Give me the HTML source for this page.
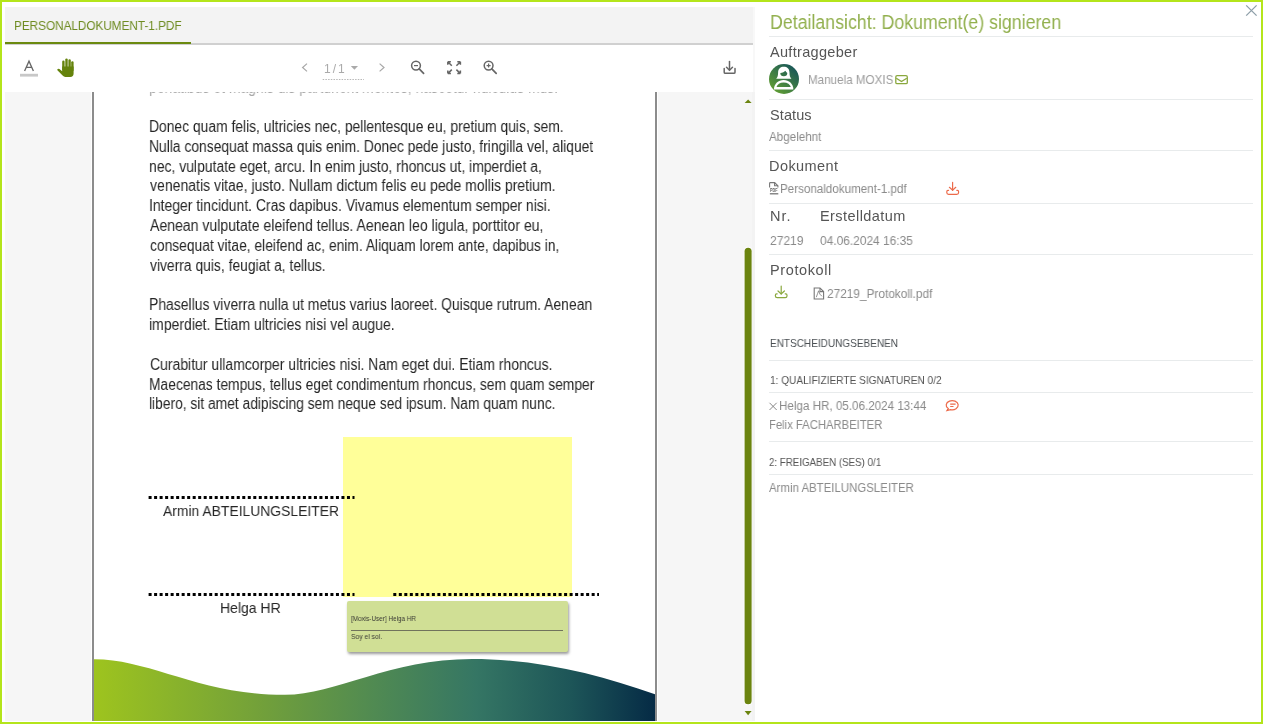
<!DOCTYPE html>
<html><head><meta charset="utf-8">
<style>
*{margin:0;padding:0;box-sizing:border-box}
html,body{width:1263px;height:724px;overflow:hidden;background:#fff;font-family:"Liberation Sans",sans-serif;position:relative}
.t{position:absolute;white-space:pre;transform-origin:0 0;will-change:transform;font-family:"Liberation Sans",sans-serif}
.bp{display:inline-block;width:0;height:0;vertical-align:baseline}
.r{position:absolute}
svg{position:absolute;overflow:visible}
#frame{left:0;top:0;width:1263px;height:724px;border:2px solid #b4e51b;z-index:50;pointer-events:none}
.dv{position:absolute;left:769px;width:484px;height:1px;background:#e8ebec}
</style></head><body>
<!-- tab bar -->
<div class="r" style="left:5px;top:7px;width:748px;height:36px;background:#f3f3f3"></div>
<div class="r" style="left:5px;top:43px;width:748px;height:2px;background:#d0d0d0"></div>
<div class="r" style="left:753px;top:7px;width:2px;height:85px;background:#f8f8f8"></div>
<div class="r" style="left:752px;top:92px;width:3px;height:629px;background:#f3f3f3;z-index:2"></div>
<div class="r" style="left:5px;top:42px;width:186px;height:2px;background:#6b8a10"></div>

<!-- toolbar icons -->
<svg style="left:0;top:0" width="760" height="92" viewBox="0 0 760 92">
  <!-- A underline -->
  <path d="M24.6 71 L29 61.2 L33.4 71 M26.3 67.3 H31.7" fill="none" stroke="#666" stroke-width="1.3"/>
  <rect x="20" y="73.8" width="18" height="2.8" fill="#c8c8c8"/>
  <!-- hand -->
  <g fill="#65830c">
    <rect x="62.2" y="60.6" width="2.4" height="10" rx="1.2"/>
    <rect x="65.3" y="58.4" width="2.4" height="10" rx="1.2"/>
    <rect x="68.4" y="59.3" width="2.4" height="10" rx="1.2"/>
    <rect x="71.2" y="61.3" width="2.4" height="10" rx="1.2"/>
    <path d="M62.2 66.5 H73.6 V73.5 Q73.6 76.9 70.2 76.9 H65.4 Q63.8 76.9 62.6 75.6 L57.4 70.2 Q56.9 69.3 57.8 68.9 Q58.6 68.5 59.4 69.1 L62.2 71.2 Z"/>
  </g>
  <g fill="#b4c486" opacity="0.0"></g>
  <!-- prev chevron -->
  <path d="M307 63.6 L302.6 67.5 L307 71.4" fill="none" stroke="#a8a8a8" stroke-width="1.2"/>
  <!-- caret -->
  <path d="M350.8 66.1 H358 L354.4 69.7 Z" fill="#aaa"/>
  <!-- dotted underline -->
  <line x1="322.7" y1="79.5" x2="364" y2="79.5" stroke="#b8b8b8" stroke-width="1" stroke-dasharray="1.5 1.2"/>
  <!-- next chevron -->
  <path d="M379.6 63.6 L384 67.5 L379.6 71.4" fill="none" stroke="#a8a8a8" stroke-width="1.2"/>
  <!-- zoom out -->
  <circle cx="416" cy="65.6" r="4.4" fill="none" stroke="#666" stroke-width="1.5"/>
  <path d="M419.2 68.8 L423.6 73.3" stroke="#666" stroke-width="1.7" stroke-linecap="round"/>
  <path d="M414 65.6 H418" stroke="#666" stroke-width="1.2"/>
  <!-- fullscreen -->
  <g fill="none" stroke="#666" stroke-width="1.5">
    <path d="M447.8 61.7 L451.8 65.7 M447.8 61.7 V64.8 M447.8 61.7 H450.9"/>
    <path d="M460.4 61.7 L456.4 65.7 M460.4 61.7 V64.8 M460.4 61.7 H457.3"/>
    <path d="M447.8 73.6 L451.8 69.6 M447.8 73.6 V70.5 M447.8 73.6 H450.9"/>
    <path d="M460.4 73.6 L456.4 69.6 M460.4 73.6 V70.5 M460.4 73.6 H457.3"/>
  </g>
  <!-- zoom in -->
  <circle cx="488.6" cy="65.6" r="4.4" fill="none" stroke="#666" stroke-width="1.5"/>
  <path d="M491.8 68.8 L496.2 73.3" stroke="#666" stroke-width="1.7" stroke-linecap="round"/>
  <path d="M486.6 65.6 H490.6 M488.6 63.6 V67.6" stroke="#666" stroke-width="1.2"/>
  <!-- download -->
  <g fill="none" stroke="#666" stroke-width="1.5" stroke-linecap="round">
    <path d="M729.5 61.5 V70"/>
    <path d="M726.5 67.2 L729.5 70.2 L732.5 67.2"/>
    <path d="M724.2 68.4 V72.2 Q724.2 73.3 725.3 73.3 H733.9 Q735 73.3 735 72.2 V68.4"/>
  </g>
</svg>

<!-- viewer -->
<div class="r" style="left:5px;top:92px;width:750px;height:629px;background:#f6f6f6;overflow:hidden">
  <div class="r" style="left:-5px;top:-92px;width:1263px;height:724px">
    <div class="r" style="left:91px;top:0;width:567px;height:724px;background:#fff"></div>
    <div class="r" style="left:92px;top:0;width:2px;height:724px;background:#8c8c8c"></div>
    <div class="r" style="left:655px;top:0;width:2px;height:724px;background:#8c8c8c"></div>
    <!-- yellow box -->
    <div class="r" style="left:343px;top:437px;width:229px;height:160px;background:#ffff99"></div>
    <svg style="left:0;top:0" width="760" height="724">
      <g stroke="#000" stroke-width="3" stroke-dasharray="3 2.51">
        <line x1="148.6" y1="497.5" x2="354.5" y2="497.5"/>
        <line x1="148.6" y1="594.5" x2="354.5" y2="594.5"/>
        <line x1="393.3" y1="594.5" x2="599" y2="594.5"/>
      </g>
      <defs>
        <linearGradient id="wg" x1="93" y1="0" x2="656" y2="0" gradientUnits="userSpaceOnUse">
          <stop offset="0" stop-color="#9ec41e"/>
          <stop offset="0.3" stop-color="#72a03a"/>
          <stop offset="0.5" stop-color="#508a52"/>
          <stop offset="0.68" stop-color="#357664"/>
          <stop offset="0.85" stop-color="#1d5558"/>
          <stop offset="1" stop-color="#052a45"/>
        </linearGradient>
      </defs>
      <path d="M94 659.2 C150 659, 200 695, 285 694.8 C335 694.8, 390 659, 472 659 C540 659, 600 675, 655 694.3 L655 721 L94 721 Z" fill="url(#wg)"/>
    </svg>
    <!-- note -->
    <div class="r" style="left:347px;top:600.5px;width:221px;height:51.5px;background:#d0df95;box-shadow:1px 2px 3px rgba(0,0,0,0.4);border-radius:2px"></div>
    <div class="r" style="left:351px;top:630.2px;width:212px;height:1.3px;background:#70735c"></div>
<div class="t" id="t21" style="left:149.13px;top:80.00px;font-size:16px;line-height:16px;color:#a8a8a8;font-weight:normal;transform:scaleX(0.8713);">penatibus et magnis dis parturient montes, nascetur ridiculus mus.<i class="bp"></i></div>
<div class="t" id="t22" style="left:149.13px;top:119.00px;font-size:16px;line-height:16px;color:#262626;font-weight:normal;transform:scaleX(0.8666);">Donec quam felis, ultricies nec, pellentesque eu, pretium quis, sem.<i class="bp"></i></div>
<div class="t" id="t23" style="left:149.13px;top:138.83px;font-size:16px;line-height:16px;color:#262626;font-weight:normal;transform:scaleX(0.8656);">Nulla consequat massa quis enim. Donec pede justo, fringilla vel, aliquet<i class="bp"></i></div>
<div class="t" id="t24" style="left:149.13px;top:158.65px;font-size:16px;line-height:16px;color:#262626;font-weight:normal;transform:scaleX(0.8713);">nec, vulputate eget, arcu. In enim justo, rhoncus ut, imperdiet a,<i class="bp"></i></div>
<div class="t" id="t25" style="left:150.00px;top:178.46px;font-size:16px;line-height:16px;color:#262626;font-weight:normal;transform:scaleX(0.8770);">venenatis vitae, justo. Nullam dictum felis eu pede mollis pretium.<i class="bp"></i></div>
<div class="t" id="t26" style="left:149.13px;top:198.29px;font-size:16px;line-height:16px;color:#262626;font-weight:normal;transform:scaleX(0.8709);">Integer tincidunt. Cras dapibus. Vivamus elementum semper nisi.<i class="bp"></i></div>
<div class="t" id="t27" style="left:150.00px;top:218.10px;font-size:16px;line-height:16px;color:#262626;font-weight:normal;transform:scaleX(0.8793);">Aenean vulputate eleifend tellus. Aenean leo ligula, porttitor eu,<i class="bp"></i></div>
<div class="t" id="t28" style="left:150.00px;top:237.94px;font-size:16px;line-height:16px;color:#262626;font-weight:normal;transform:scaleX(0.8634);">consequat vitae, eleifend ac, enim. Aliquam lorem ante, dapibus in,<i class="bp"></i></div>
<div class="t" id="t29" style="left:150.00px;top:257.75px;font-size:16px;line-height:16px;color:#262626;font-weight:normal;transform:scaleX(0.8663);">viverra quis, feugiat a, tellus.<i class="bp"></i></div>
<div class="t" id="t30" style="left:149.13px;top:297.40px;font-size:16px;line-height:16px;color:#262626;font-weight:normal;transform:scaleX(0.8712);">Phasellus viverra nulla ut metus varius laoreet. Quisque rutrum. Aenean<i class="bp"></i></div>
<div class="t" id="t31" style="left:149.13px;top:317.21px;font-size:16px;line-height:16px;color:#262626;font-weight:normal;transform:scaleX(0.8741);">imperdiet. Etiam ultricies nisi vel augue.<i class="bp"></i></div>
<div class="t" id="t32" style="left:150.00px;top:356.86px;font-size:16px;line-height:16px;color:#262626;font-weight:normal;transform:scaleX(0.8737);">Curabitur ullamcorper ultricies nisi. Nam eget dui. Etiam rhoncus.<i class="bp"></i></div>
<div class="t" id="t33" style="left:149.14px;top:376.67px;font-size:16px;line-height:16px;color:#262626;font-weight:normal;transform:scaleX(0.8633);">Maecenas tempus, tellus eget condimentum rhoncus, sem quam semper<i class="bp"></i></div>
<div class="t" id="t34" style="left:149.14px;top:396.49px;font-size:16px;line-height:16px;color:#262626;font-weight:normal;transform:scaleX(0.8622);">libero, sit amet adipiscing sem neque sed ipsum. Nam quam nunc.<i class="bp"></i></div>
<div class="t" id="t35" style="left:162.60px;top:503.41px;font-size:15px;line-height:15px;color:#262626;font-weight:normal;transform:scaleX(0.9260);">Armin ABTEILUNGSLEITER<i class="bp"></i></div>
<div class="t" id="t36" style="left:220.47px;top:599.91px;font-size:15px;line-height:15px;color:#262626;font-weight:normal;transform:scaleX(0.9331);">Helga HR<i class="bp"></i></div>
<div class="t" id="t37" style="left:351.40px;top:614.61px;font-size:7.9px;line-height:7.9px;color:#3a3a35;font-weight:normal;transform:scaleX(0.8052);">[Moxis-User] Helga HR<i class="bp"></i></div>
<div class="t" id="t38" style="left:351.40px;top:633.20px;font-size:7.9px;line-height:7.9px;color:#3a3a35;font-weight:normal;transform:scaleX(0.8561);">Soy el sol.<i class="bp"></i></div>
  </div>
  <!-- scrollbar -->
  <svg style="left:0;top:0" width="749" height="629">
    <path d="M739.6 11.1 L743.1 7.4 L746.6 11.1 Z" fill="#6b840f" transform="translate(0,0)"/>
    <rect x="738.6" y="154.7" width="9" height="458.6" rx="4.5" fill="#fff" opacity="0.8"/><rect x="739.6" y="155.7" width="7" height="456.6" rx="3.5" fill="#6b840f"/>
    <path d="M739.6 619 L743.1 623.2 L746.6 619 Z" fill="#6b840f"/>
  </svg>
</div>

<!-- right panel -->
<svg style="left:1240px;top:0" width="23" height="30">
  <path d="M6.2 5.4 L16.6 15.6 M16.6 5.4 L6.2 15.6" stroke="#8d9ea8" stroke-width="1.3"/>
</svg>
<div class="dv" style="top:36px"></div>
<div class="dv" style="top:99px"></div>
<div class="dv" style="top:150px"></div>
<div class="dv" style="top:203px"></div>
<div class="dv" style="top:254px"></div>
<div class="dv" style="top:360px"></div>
<div class="dv" style="top:392px"></div>
<div class="dv" style="top:441px"></div>
<div class="dv" style="top:474px"></div>

<!-- avatar -->
<svg style="left:769px;top:64.25px" width="30" height="30" viewBox="0 0 30 30">
  <defs><linearGradient id="av" x1="4" y1="28" x2="26" y2="2" gradientUnits="userSpaceOnUse"><stop offset="0" stop-color="#62a032"/><stop offset="1" stop-color="#165459"/></linearGradient></defs>
  <circle cx="15" cy="15" r="15" fill="url(#av)"/>
  <path d="M7.2 14.7 C8.6 13.4 9.1 11.6 9.1 8.6 C9.1 4.6 11.6 2.8 14.8 2.8 C18 2.8 20.5 4.6 20.5 8.6 C20.5 11.6 21 13.4 22.4 14.7 Z" fill="#fff"/>
  <path d="M11.3 8.9 A3.5 3.3 0 0 0 18.3 8.9 C17.6 8.4 16.8 7.6 16.3 6.7 C15.4 7.8 13.6 8.6 11.3 8.9 Z" fill="url(#av)"/>
  <path d="M4.9 25.4 C5.1 19.8 9.3 16.1 14.65 16.1 C20 16.1 24.2 19.8 24.4 25.4 Z" fill="#fff"/>
  <path d="M7.5 23.1 C8.2 20.2 10.9 18.4 14.65 18.4 C18.4 18.4 21.1 20.2 21.8 23.1 Z" fill="url(#av)"/>
</svg>
<!-- envelope -->
<svg style="left:0;top:0" width="1263" height="724">
  <rect x="895.8" y="75.7" width="11.5" height="8" rx="1.3" fill="none" stroke="#8aa83e" stroke-width="1.3"/>
  <path d="M896.3 78.2 L901.5 81.6 L906.8 78.2" fill="none" stroke="#8aa83e" stroke-width="1.3"/>
  <!-- pdf icon 1 -->
  <g fill="none" stroke="#777" stroke-width="1.1">
    <path d="M769.6 187.5 V183.3 Q769.6 182.6 770.3 182.6 H774.6 L777.9 185.8 V187.5"/>
    <path d="M774.6 182.6 V185.8 H777.9"/>
  </g>
  <rect x="769.8" y="192.9" width="8.6" height="1.6" rx="0.6" fill="#888"/>
  <text x="770" y="191.7" font-family="Liberation Sans" font-weight="bold" font-size="4.6" fill="#666" textLength="7.5" lengthAdjust="spacingAndGlyphs">PDF</text>
  <!-- red download -->
  <g fill="none" stroke="#ec6a4a" stroke-width="1.2" stroke-linecap="round">
    <path d="M952.6 182.4 V190.3"/>
    <path d="M949.4 187.3 L952.6 190.3 L955.8 187.3"/>
    <path d="M948.6 190.3 H947.9 Q946.8 190.3 946.8 191.8 V192.6 Q946.8 194.4 948.6 194.4 H956.8 Q958.6 194.4 958.6 192.6 V191.8 Q958.6 190.3 957.5 190.3 H956.8"/>
  </g>
  <!-- green download -->
  <g fill="none" stroke="#8aa83e" stroke-width="1.2" stroke-linecap="round">
    <path d="M781.2 286 V294"/>
    <path d="M778 291 L781.2 294 L784.4 291"/>
    <path d="M777.2 293.8 H776.5 Q775.4 293.8 775.4 295.3 V296 Q775.4 297.6 777.2 297.6 H785.2 Q787 297.6 787 296 V295.3 Q787 293.8 785.9 293.8 H785.2"/>
  </g>
  <!-- pdf icon 2 -->
  <g fill="none" stroke="#777" stroke-width="1.1">
    <path d="M814.2 299 V288 H820 L823.6 291.6 V299 Z"/>
    <path d="M820 288 V291.6 H823.6"/>
    <path d="M816.3 297.2 Q817.6 293.5 818.6 290.8 Q819.5 294.8 822 296.3" stroke-width="0.8"/>
  </g>
  <!-- × before Helga -->
  <path d="M769.5 402.8 L776.7 410 M776.7 402.8 L769.5 410" stroke="#7a7a7a" stroke-width="0.9"/>
  <!-- comment -->
  <g fill="none" stroke="#ec6a4a" stroke-width="1.2">
    <path d="M948.2 408.6 A6 4.6 0 1 1 950.6 409.6 L947 410.6 Z"/>
    <path d="M950.2 404.2 H955.6 M950.2 406.5 H953.5"/>
  </g>
</svg>
<div class="t" id="t0" style="left:13.60px;top:19.00px;font-size:13px;line-height:13px;color:#6e8b21;font-weight:normal;transform:scaleX(0.9025);">PERSONALDOKUMENT-1.PDF<i class="bp"></i></div>
<div class="t" id="t1" style="left:323.90px;top:62.61px;font-size:12px;line-height:12px;color:#aaaaaa;font-weight:normal;letter-spacing:2.046px;">1/1<i class="bp"></i></div>
<div class="t" id="t2" style="left:769.78px;top:13.41px;font-size:19.4px;line-height:19.4px;color:#92b04e;font-weight:normal;transform:scaleX(0.9157);">Detailansicht: Dokument(e) signieren<i class="bp"></i></div>
<div class="t" id="t3" style="left:770.10px;top:45.01px;font-size:14.5px;line-height:14.5px;color:#555555;font-weight:normal;letter-spacing:0.318px;">Auftraggeber<i class="bp"></i></div>
<div class="t" id="t4" style="left:807.76px;top:74.21px;font-size:12.4px;line-height:12.4px;color:#9c9c9c;font-weight:normal;transform:scaleX(0.9382);">Manuela MOXIS<i class="bp"></i></div>
<div class="t" id="t5" style="left:770.00px;top:108.01px;font-size:14.5px;line-height:14.5px;color:#555555;font-weight:normal;letter-spacing:0.089px;">Status<i class="bp"></i></div>
<div class="t" id="t6" style="left:769.20px;top:131.01px;font-size:12.5px;line-height:12.5px;color:#8a8a8a;font-weight:normal;transform:scaleX(0.9309);">Abgelehnt<i class="bp"></i></div>
<div class="t" id="t7" style="left:769.30px;top:159.01px;font-size:14.5px;line-height:14.5px;color:#555555;font-weight:normal;letter-spacing:0.435px;">Dokument<i class="bp"></i></div>
<div class="t" id="t8" style="left:780.47px;top:182.61px;font-size:12.5px;line-height:12.5px;color:#8a8a8a;font-weight:normal;transform:scaleX(0.9298);">Personaldokument-1.pdf<i class="bp"></i></div>
<div class="t" id="t9" style="left:769.70px;top:209.10px;font-size:14.5px;line-height:14.5px;color:#555555;font-weight:normal;letter-spacing:0.950px;">Nr.<i class="bp"></i></div>
<div class="t" id="t10" style="left:819.70px;top:209.10px;font-size:14.5px;line-height:14.5px;color:#555555;font-weight:normal;letter-spacing:0.436px;">Erstelldatum<i class="bp"></i></div>
<div class="t" id="t11" style="left:770.00px;top:234.90px;font-size:12.5px;line-height:12.5px;color:#8a8a8a;font-weight:normal;transform:scaleX(0.9653);">27219<i class="bp"></i></div>
<div class="t" id="t12" style="left:819.70px;top:234.90px;font-size:12.5px;line-height:12.5px;color:#8a8a8a;font-weight:normal;transform:scaleX(0.9542);">04.06.2024 16:35<i class="bp"></i></div>
<div class="t" id="t13" style="left:769.70px;top:263.41px;font-size:14.5px;line-height:14.5px;color:#555555;font-weight:normal;letter-spacing:0.613px;">Protokoll<i class="bp"></i></div>
<div class="t" id="t14" style="left:826.60px;top:287.90px;font-size:12.5px;line-height:12.5px;color:#8a8a8a;font-weight:normal;transform:scaleX(0.9479);">27219_Protokoll.pdf<i class="bp"></i></div>
<div class="t" id="t15" style="left:770.00px;top:338.00px;font-size:10.5px;line-height:10.5px;color:#4a4f53;font-weight:normal;transform:scaleX(0.9543);">ENTSCHEIDUNGSEBENEN<i class="bp"></i></div>
<div class="t" id="t16" style="left:770.40px;top:375.01px;font-size:11.3px;line-height:11.3px;color:#555555;font-weight:normal;transform:scaleX(0.8950);">1: QUALIFIZIERTE SIGNATUREN 0/2<i class="bp"></i></div>
<div class="t" id="t17" style="left:779.07px;top:400.40px;font-size:12.5px;line-height:12.5px;color:#8a8a8a;font-weight:normal;transform:scaleX(0.9302);">Helga HR, 05.06.2024 13:44<i class="bp"></i></div>
<div class="t" id="t18" style="left:768.90px;top:418.72px;font-size:12.5px;line-height:12.5px;color:#8a8a8a;font-weight:normal;transform:scaleX(0.9015);">Felix FACHARBEITER<i class="bp"></i></div>
<div class="t" id="t19" style="left:769.40px;top:456.51px;font-size:11.3px;line-height:11.3px;color:#555555;font-weight:normal;transform:scaleX(0.8630);">2: FREIGABEN (SES) 0/1<i class="bp"></i></div>
<div class="t" id="t20" style="left:769.40px;top:481.81px;font-size:12.5px;line-height:12.5px;color:#8a8a8a;font-weight:normal;transform:scaleX(0.9149);">Armin ABTEILUNGSLEITER<i class="bp"></i></div>
<div class="r" id="frame"></div>
</body></html>
